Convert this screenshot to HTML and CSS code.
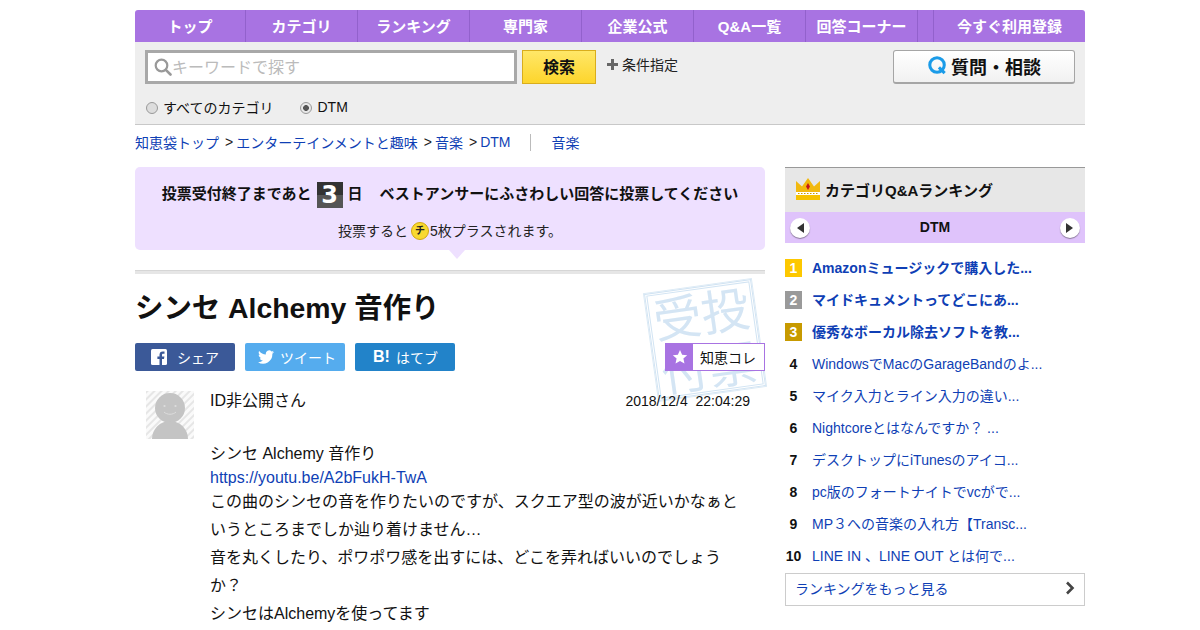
FILE: index.html
```html
<!DOCTYPE html>
<html lang="ja">
<head>
<meta charset="utf-8">
<title>シンセ Alchemy 音作り</title>
<link rel="stylesheet" href="styles.css">
</head>
<body>
<div class="page">
  <nav class="nav">
    <a class="tab">トップ</a><a class="tab">カテゴリ</a><a class="tab">ランキング</a><a class="tab">専門家</a><a class="tab">企業公式</a><a class="tab">Q&amp;A一覧</a><a class="tab">回答コーナー</a><span class="tab-gap"></span><a class="tab-reg">今すぐ利用登録</a>
  </nav>
  <header class="search">
    <div class="search-row">
      <div class="search-box">
        <svg class="glass" width="18" height="18" viewBox="0 0 18 18"><circle cx="7.5" cy="7.5" r="5.8" fill="none" stroke="#999" stroke-width="2.2"/><path d="M11.8 11.8L16.5 16.5" stroke="#999" stroke-width="2.6" stroke-linecap="round"/></svg>
        <span class="placeholder">キーワードで探す</span>
      </div>
      <button class="search-btn">検索</button>
      <span class="cond"><svg width="11" height="11" viewBox="0 0 11 11"><path d="M4 0h3v4h4v3H7v4H4V7H0V4h4z" fill="#666"/></svg>条件指定</span>
      <button class="ask-btn"><svg width="21" height="21" viewBox="0 0 22 22"><circle cx="10.5" cy="10.5" r="7.6" fill="none" stroke="#1a9be8" stroke-width="3.2"/><path d="M12.5 13l6 6" stroke="#1a9be8" stroke-width="3.2"/></svg>質問・相談</button>
    </div>
    <div class="radio-row">
      <span class="radio-item"><i class="radio"></i>すべてのカテゴリ</span>
      <span class="radio-item"><i class="radio on"></i>DTM</span>
    </div>
  </header>
  <div class="crumbs">
    <a>知恵袋トップ</a><span class="sep">&gt;</span><a>エンターテインメントと趣味</a><span class="sep">&gt;</span><a>音楽</a><span class="sep">&gt;</span><a>DTM</a><span class="rule"></span><a>音楽</a>
  </div>
  <div class="columns">
    <main class="main">
      <section class="vote">
        <p class="vote-head">投票受付終了まであと<b class="digit">3</b>日<span class="vote-msg">ベストアンサーにふさわしい回答に投票してください</span></p>
        <p class="vote-sub">投票すると<i class="coin">チ</i>5枚プラスされます。</p>
      </section>
      <div class="divider"></div>
      <div class="stamp">受投<br>付票</div>
      <h1 class="title">シンセ Alchemy 音作り</h1>
      <div class="share">
        <a class="sbtn fb"><svg width="16" height="16" viewBox="0 0 16 16"><rect width="16" height="16" rx="1.5" fill="#fff"/><path d="M11 16V10h2l.4-2.5H11V6c0-.8.3-1.2 1.2-1.2h1.3V2.6C13.200 2.500 12.500 2.400 11.700 2.400 9.800 2.400 8.500 3.600 8.500 5.700v1.800H6.400V10h2.100v6z" fill="#3b5998"/></svg><span>シェア</span></a>
        <a class="sbtn tw"><svg width="16" height="14" viewBox="0 0 24 20"><path d="M24 2.400c-.9.400-1.800.7-2.800.8 1-.6 1.800-1.600 2.200-2.700-1 .6-2 1-3.100 1.200A4.900 4.900 0 0 0 11.900 6.200C7.800 6 4.200 4 1.700.9c-1.300 2.200-.6 5.100 1.500 6.500-.8 0-1.600-.2-2.200-.6 0 2.300 1.600 4.400 3.900 4.900-.7.200-1.500.2-2.200.1.600 2 2.400 3.400 4.600 3.400A9.900 9.900 0 0 1 0 17.700 13.900 13.900 0 0 0 21.500 5.300c1-.7 1.800-1.600 2.500-2.900z" fill="#fff"/></svg><span>ツイート</span></a>
        <a class="sbtn hb"><b class="hb-mark">B!</b><span>はてブ</span></a>
        <a class="coll"><i class="coll-star"><svg width="16" height="16" viewBox="0 0 24 24"><path d="M12 1.500l3.200 7 7.600.8-5.700 5.100 1.600 7.500L12 18l-6.700 3.900 1.600-7.500L1.200 9.300l7.600-.8z" fill="#fff"/></svg></i><span>知恵コレ</span></a>
      </div>
      <article class="post">
        <svg class="avatar" width="48" height="48" viewBox="0 0 48 48">
          <defs><pattern id="st" width="5" height="5" patternUnits="userSpaceOnUse" patternTransform="rotate(-45)"><rect width="5" height="5" fill="#fafafa"/><rect width="5" height="2" fill="#e6e6e6"/></pattern></defs>
          <rect width="48" height="48" fill="url(#st)"/>
          <circle cx="24" cy="17" r="15" fill="#c4c4c4"/>
          <path d="M6 48c0-10 8-18 18-18s18 8 18 18z" fill="#c4c4c4"/>
          <circle cx="18.500" cy="15" r="1.100" fill="#ddd"/><circle cx="29.500" cy="15" r="1.100" fill="#ddd"/>
          <path d="M18 21c3 3 9 3 12 0" fill="none" stroke="#ddd" stroke-width="1"/>
        </svg>
        <div class="post-body">
          <div class="post-meta"><span>ID非公開さん</span><time>2018/12/4&nbsp; 22:04:29</time></div>
          <p class="q-line">シンセ Alchemy 音作り</p>
          <p class="q-line"><a class="url">https://youtu.be/A2bFukH-TwA</a></p>
          <p class="q-text">この曲のシンセの音を作りたいのですが、スクエア型の波が近いかなぁというところまでしか辿り着けません…<br>音を丸くしたり、ポワポワ感を出すには、どこを弄ればいいのでしょうか？<br>シンセはAlchemyを使ってます</p>
        </div>
      </article>
    </main>
    <aside class="side">
      <h2 class="rank-head">
        <svg width="26" height="24" viewBox="0 0 26 24"><path d="M1 4l6 5.500L13 1l6 8.500L25 4v12H1z" fill="#f2b90f"/><rect x="1" y="15" width="24" height="3" fill="#fff"/><path d="M3 16.500h20" stroke="#c99a00" stroke-width="1" stroke-dasharray="1.500 1.500"/><rect x="1" y="18" width="24" height="5" fill="#f6c200"/><path d="M13 6l2 3.500-2 3.500-2-3.500z" fill="#c4161c"/></svg>
        カテゴリQ&amp;Aランキング
      </h2>
      <div class="rank-cat">
        <i class="round"><b class="tri-l"></b></i><span>DTM</span><i class="round"><b class="tri-r"></b></i>
      </div>
      <ol class="rank-list">
        <li class="top"><span class="no n1">1</span><a>Amazonミュージックで購入した...</a></li>
        <li class="top"><span class="no n2">2</span><a>マイドキュメントってどこにあ...</a></li>
        <li class="top"><span class="no n3">3</span><a>優秀なボーカル除去ソフトを教...</a></li>
        <li><span class="no">4</span><a>WindowsでMacのGarageBandのよ...</a></li>
        <li><span class="no">5</span><a>マイク入力とライン入力の違い...</a></li>
        <li><span class="no">6</span><a>Nightcoreとはなんですか？ ...</a></li>
        <li><span class="no">7</span><a>デスクトップにiTunesのアイコ...</a></li>
        <li><span class="no">8</span><a>pc版のフォートナイトでvcがで...</a></li>
        <li><span class="no">9</span><a>MP３への音楽の入れ方【Transc...</a></li>
        <li><span class="no">10</span><a>LINE IN 、LINE OUT とは何で...</a></li>
      </ol>
      <a class="more">ランキングをもっと見る<svg width="10" height="14" viewBox="0 0 10 14"><path d="M2 1.500L7.500 7 2 12.500" fill="none" stroke="#444" stroke-width="2.600"/></svg></a>
    </aside>
  </div>
</div>
</body>
</html>
```
FILE: styles.css
```css
* { box-sizing: border-box; }
html, body { margin: 0; padding: 0; height: 630px; overflow: hidden; background: #fff; }
body { font-family: "Liberation Sans", "Noto Sans CJK JP", sans-serif; font-size: 14px; color: #111; }
p, h1, h2, ol { margin: 0; padding: 0; }
a { color: #0f3fb5; text-decoration: none; }
i { font-style: normal; }
.page { width: 950px; margin-left: 135px; padding-top: 10px; }

.nav { display: flex; height: 32px; background: #a873e2; border-radius: 3px 3px 0 0; }
.tab { width: 112px; display: flex; align-items: center; justify-content: center; padding-bottom: 2px; color: #fff; font-size: 15px; font-weight: 700; border-right: 1px solid #9261cc; }
.tab:first-child { width: 111px; }
.tab-gap { width: 16px; border-right: 1px solid #9261cc; }
.tab-reg { flex: 1; display: flex; align-items: center; justify-content: center; padding-bottom: 2px; color: #fff; font-size: 15px; font-weight: 700; }

.search { height: 83px; background: #eee; border-bottom: 1px solid #c8c8c8; padding: 8px 10px 0; }
.search-row { display: flex; align-items: flex-start; height: 34px; }
.search-box { width: 372px; height: 34px; border: 3px solid #a8a8a8; background: #fff; display: flex; align-items: center; padding-left: 6px; }
.glass { flex: none; }
.placeholder { color: #bbb; font-size: 16px; padding-bottom: 3px; }
.search-btn { width: 74px; height: 34px; margin-left: 5px; border: 1px solid #d9ad1c; background: linear-gradient(#ffe768, #fdd52c); color: #111; font: 700 16px "Liberation Sans", "Noto Sans CJK JP", sans-serif; padding: 0 0 2px; }
.cond { display: flex; align-items: center; gap: 4px; margin-left: 11px; height: 28px; font-size: 14px; color: #222; }
.ask-btn { width: 182px; height: 34px; margin-left: auto; display: flex; align-items: center; justify-content: center; gap: 3px; border: 1px solid #a5a5a5; border-bottom-width: 2px; border-radius: 3px; background: linear-gradient(#fff, #f1f1f1); color: #111; font: 700 18px "Liberation Sans", "Noto Sans CJK JP", sans-serif; padding: 0 0 2px; }
.radio-row { display: flex; gap: 27px; margin-top: 13px; padding-left: 1px; height: 20px; align-items: center; font-size: 14px; }
.radio-item { display: flex; align-items: center; gap: 5px; }
.radio { width: 12px; height: 12px; margin-top: 2px; border-radius: 50%; border: 1px solid #999; background: #ddd; }
.radio.on { background: radial-gradient(circle, #555 0 2.600px, #e8e8e8 3.200px); }

.crumbs { height: 42px; display: flex; align-items: center; font-size: 14px; padding-bottom: 8px; }
.sep { margin: 0 3px 0 6px; color: #222; }
.rule { width: 1px; height: 17px; background: #bbb; margin: 0 20px; }

.columns { display: flex; gap: 20px; align-items: flex-start; }
.main { width: 630px; position: relative; }
.side { width: 300px; }

.vote { height: 83px; background: #eee0ff; border-radius: 5px; text-align: center; position: relative; padding-top: 15px; }
.vote::after { content: ""; position: absolute; left: 314px; top: 83px; border: 8px solid transparent; border-top: 9px solid #eee0ff; border-bottom: 0; }
.vote-head { font-size: 15px; font-weight: 700; line-height: 24px; height: 26px; display: flex; justify-content: center; align-items: flex-start; }
.digit { width: 26px; height: 26px; margin: 0 5px; background: linear-gradient(#333 50%, #555 50%); color: #fff; font-family: "DejaVu Sans", sans-serif; font-size: 24px; line-height: 26px; display: block; }
.vote-msg { margin-left: 17px; }
.vote-sub { margin-top: 13px; font-size: 14px; line-height: 20px; color: #222; display: flex; justify-content: center; align-items: center; }
.coin { width: 18px; height: 18px; margin: 0 1px 0 3px; border-radius: 50%; background: #f8d92f; border: 1px solid #d2a70f; font-size: 10px; font-weight: 700; line-height: 15px; text-align: center; }
.divider { height: 4px; margin-top: 20px; background: #e6e6e6; border-top: 1px solid #d6d6d6; }

.stamp { position: absolute; left: 516px; top: 119px; width: 108px; height: 108px; border: 3px double #d2e4f3; outline: 1px solid #dceaf5; transform: rotate(-8deg); color: #d4e5f4; font-size: 48px; line-height: 54px; text-align: center; font-weight: 400; }

.title { position: relative; font-size: 28.4px; font-weight: 700; line-height: 38px; margin-top: 15px; color: #111; }
.share { position: relative; display: flex; align-items: center; gap: 10px; margin-top: 16px; height: 28px; }
.sbtn { width: 100px; height: 28px; border-radius: 2px; display: flex; align-items: center; color: #fff; font-size: 14px; }
.fb { background: #3b5998; padding-left: 16px; gap: 10px; }
.tw { background: #55acee; padding-left: 13px; gap: 6px; }
.hb { background: #2283c9; padding-left: 18px; gap: 6px; }
.hb-mark { font-size: 16px; font-weight: 700; }
.coll { margin-left: auto; width: 100px; height: 28px; border: 1px solid #a873e2; background: #fff; color: #111; display: flex; align-items: center; font-size: 14px; }
.coll-star { width: 27px; height: 26px; background: #a873e2; display: flex; align-items: center; justify-content: center; margin-right: 7px; }

.post { position: relative; display: flex; margin-top: 20px; padding-left: 11px; }
.avatar { flex: none; }
.post-body { width: 540px; margin-left: 16px; font-size: 16px; }
.post-meta { display: flex; justify-content: space-between; line-height: 20px; margin-bottom: 31px; }
.post-meta time { font-size: 14px; }
.q-line { line-height: 24px; }
.url { color: #0f3fb5; }
.q-text { line-height: 28px; margin-top: -2px; width: 530px; }

.rank-head { height: 45px; background: #e7e7e7; border-top: 1px solid #999; display: flex; align-items: center; gap: 4px; padding: 0 0 2px 10px; font-size: 15px; font-weight: 700; color: #111; }
.rank-cat { height: 31px; background: #dfc3fb; display: flex; align-items: center; justify-content: space-between; padding: 0 5px; font-size: 14px; font-weight: 700; }
.rank-cat span { padding-bottom: 2px; }
.round { width: 20px; height: 20px; border-radius: 50%; background: #fff; box-shadow: 0 1px 1px #8a7a9a; display: flex; align-items: center; justify-content: center; }
.tri-l { border: 5px solid transparent; border-right: 7px solid #333; border-left: 0; }
.tri-r { border: 5px solid transparent; border-left: 7px solid #333; border-right: 0; }
.rank-list { list-style: none; margin-top: 9px; }
.rank-list li { height: 32px; display: flex; align-items: center; font-size: 14px; }
.rank-list a { padding-bottom: 2px; }
.rank-list li.top a { font-weight: 700; }
.no { width: 17px; height: 18px; margin-right: 10px; font-weight: 700; text-align: center; line-height: 18px; flex: none; color: #111; }
.n1, .n2, .n3 { color: #fff; }
.n1 { background: #fdc800; }
.n2 { background: #9a9a9a; }
.n3 { background: #c79a00; }
.more { display: flex; align-items: center; justify-content: space-between; height: 33px; margin-top: 1px; border: 1px solid #ccc; padding: 0 9px 3px 9px; font-size: 14px; }
```
